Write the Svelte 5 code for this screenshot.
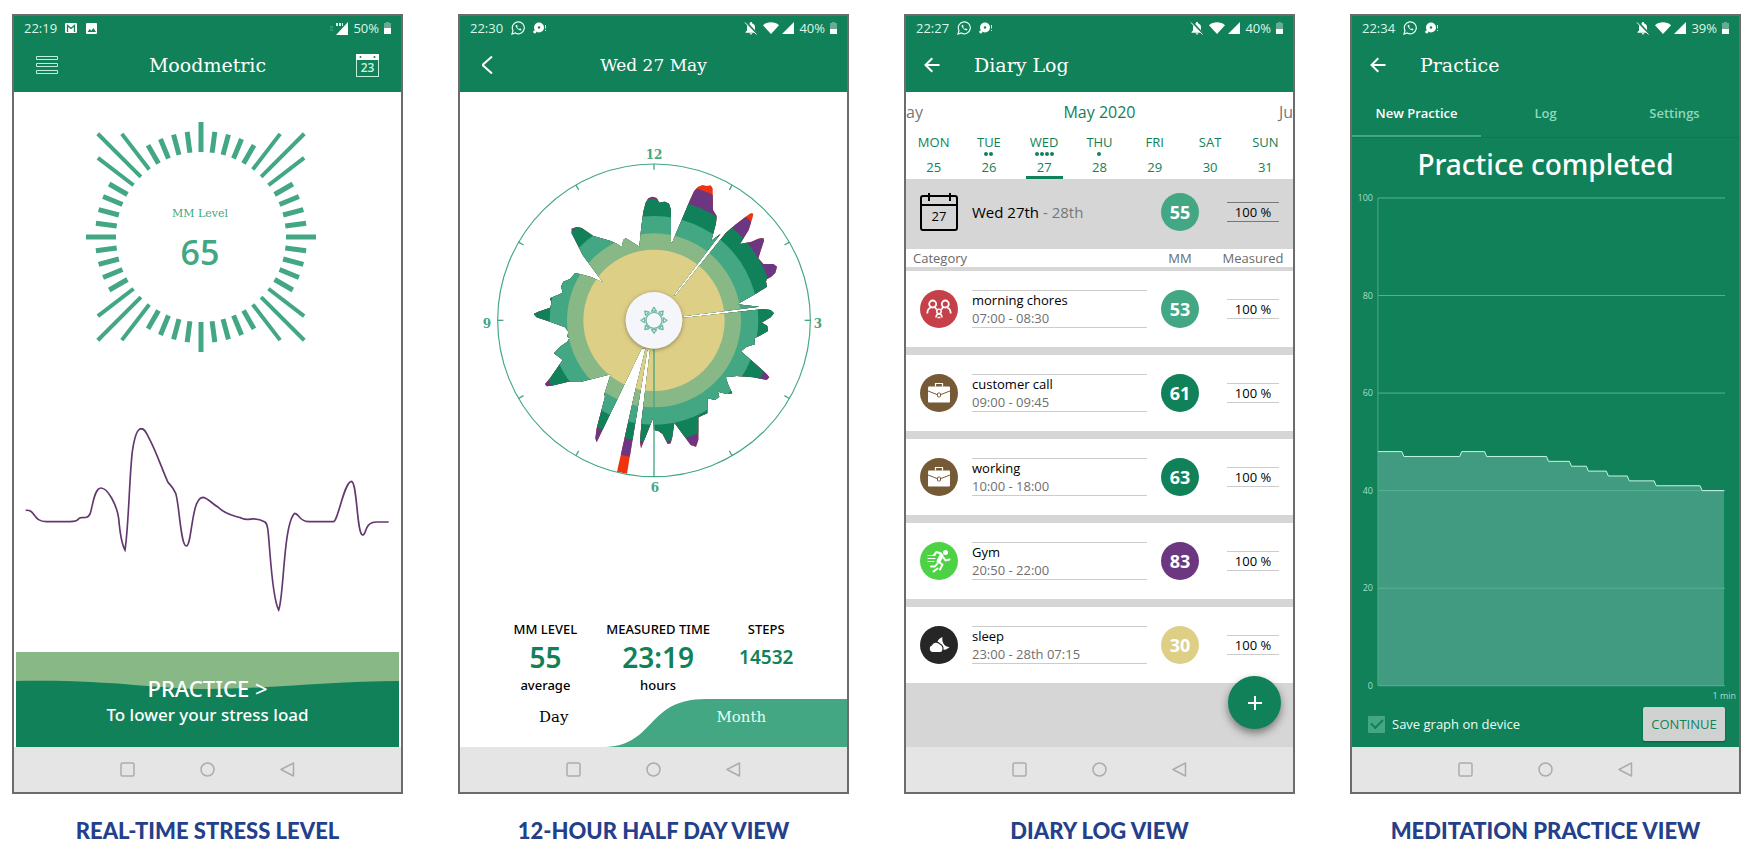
<script>
  const GREEN = '#118159';
  const MID = '#42a782';

  let activeTab = $state('New Practice');
  let saveGraph = $state(true);

  // dial ticks, one every 7.5 degrees
  const ticks = Array.from({ length: 48 }, (_, i) => {
    const pos = i % 12;
    let outer = 106;
    let width = 5;
    if (pos === 0) outer = 115;
    if (pos === 5 || pos === 7) outer = 130;
    if (pos === 6) outer = 146;
    if (pos >= 5 && pos <= 7) width = 4;
    return { angle: i * 7.5, outer, width };
  });

  const hourTicks = [0, 30, 60, 90, 120, 150, 210, 240, 270, 300, 330];
  const rings = [
    { r: 469, color: '#f0330f' },
    { r: 416, color: '#6c3780' },
    { r: 364, color: GREEN },
    { r: 313, color: MID },
    { r: 261, color: '#88b886' },
    { r: 212, color: '#decf87' }
  ];

  const outline =
    '478,350 484,290 490,245 497,218 505,205 517,200 530,204 538,218 547,216 555,215 567,221 573,240 573,335 576,340 ' +
    '588,310 605,270 630,210 642,184 654,170 668,165 680,168 692,166 698,175 699,240 710,258 708,280 694,332 722,311 ' +
    '580,497 586,497 738,308 765,285 800,258 813,249 820,251 818,262 806,300 780,342 815,335 835,326 850,324 852,332 ' +
    '842,362 835,385 850,402 880,402 891,410 886,428 874,440 860,448 858,455 861,470 830,490 772,523 838,530 608,559 ' +
    '608,564 850,537 872,540 882,550 872,562 845,578 862,588 864,603 838,618 823,625 825,643 800,650 783,664 830,705 ' +
    '860,732 868,742 860,750 820,742 770,738 737,742 745,765 757,790 740,792 714,785 718,800 705,810 690,806 683,806 ' +
    '682,850 655,862 655,930 648,950 632,945 610,915 583,878 577,920 572,940 563,942 548,912 535,903 522,900 519,865 ' +
    '483,955 480,935 485,870 510,660 502,660 441,1031 411,1025 466,780 497,655 485,655 430,770 382,870 350,937 ' +
    '346,925 350,895 375,800 373,793 392,733 345,745 300,756 265,755 215,767 200,769 195,762 210,745 248,690 222,670 ' +
    '240,650 262,635 268,625 262,620 265,605 255,592 210,575 170,562 161,552 175,545 210,533 215,520 210,505 245,490 ' +
    '248,485 243,470 250,455 270,447 285,430 300,432 335,442 370,458 345,425 308,375 275,310 275,296 290,291 305,294 ' +
    '340,318 390,332 412,342 425,352 430,330 437,325 450,332';

  const week = [
    { day: 'MON', date: 25, dots: 0 },
    { day: 'TUE', date: 26, dots: 2 },
    { day: 'WED', date: 27, dots: 4, current: true },
    { day: 'THU', date: 28, dots: 1 },
    { day: 'FRI', date: 29, dots: 0 },
    { day: 'SAT', date: 30, dots: 0 },
    { day: 'SUN', date: 31, dots: 0 }
  ];

  const entries = [
    { name: 'morning chores', time: '07:00 - 08:30', icon: 'family', level: 53 },
    { name: 'customer call', time: '09:00 - 09:45', icon: 'case', level: 61 },
    { name: 'working', time: '10:00 - 18:00', icon: 'case', level: 63 },
    { name: 'Gym', time: '20:50 - 22:00', icon: 'run', level: 83 },
    { name: 'sleep', time: '23:00 - 28th 07:15', icon: 'sleep', level: 30 }
  ];

  function levelClass(level) {
    if (level < 40) return 'low';
    if (level < 60) return 'normal';
    if (level < 80) return 'raised';
    return 'high';
  }

  // practice session graph: [start x, end x, level]
  const CHART = { left: 26, right: 373, top: 8, bottom: 497 };
  const steps = [
    [26, 50, 48], [52, 108, 47], [110, 133, 48], [135, 195, 47], [197, 218, 46], [220, 235, 45],
    [237, 255, 44], [257, 276, 43], [278, 303, 42], [305, 349, 41], [351, 373, 40]
  ];
  const yOf = (v) => CHART.bottom - (v / 100) * (CHART.bottom - CHART.top);
  const line = steps.map(([a, b, v]) => `${a},${yOf(v)} ${b},${yOf(v)}`).join(' ');
  const area = `${CHART.left},${CHART.bottom} ${line} ${CHART.right},${CHART.bottom}`;
  const gridValues = [0, 20, 40, 60, 80, 100];
</script>

{#snippet battery(level)}
  <svg width="7" height="12" viewBox="0 0 7 12" aria-hidden="true">
    <path d="M2 0h3v1h2v11H0V1h2z" fill="#fff" opacity="0.35" />
    <rect x="0" y={12 - level} width="7" height={level} fill="#fff" />
  </svg>
{/snippet}

{#snippet statusBar(time, charge)}
  <div class="status">
    <span>{time}</span>
    <svg width="14" height="14" viewBox="0 0 14 14" fill="none" stroke="#e6fff5" aria-hidden="true">
      <path d="M1 13l1-3.4A6 6 0 1 1 4.300 12z" stroke-width="1.200" />
      <path d="M4.700 4.200c-.6 1.400 2.400 5.200 5 5.200l.9-1.200-1.700-.9-.8.800c-.9-.3-1.700-1.200-2-2l.6-.8-.7-1.500z" fill="#e6fff5" stroke="none" />
    </svg>
    <svg width="14" height="12" viewBox="0 0 14 12" aria-hidden="true">
      <circle cx="6" cy="5.500" r="5" fill="#fff" />
      <circle cx="1.800" cy="9.800" r="1.600" fill="#fff" />
      <circle cx="6" cy="5.500" r="1.200" fill="#118159" />
      <path d="M12.500 3v3.500M12.500 8v1" stroke="#cfeee1" />
    </svg>
    <div class="status-right">
      <svg width="14" height="14" viewBox="0 0 14 14" aria-hidden="true">
        <path d="M7 1c.8 0 1 .4 1 1.200 2 .6 3 2.200 3 4.200v3l1.500 1.600v.7h-11V11L3 9.400v-3c0-2 1-3.600 3-4.200C6 1.400 6.200 1 7 1zM5.700 12.300h2.600a1.300 1.300 0 0 1-2.600 0z" fill="#fff" />
        <path d="M2 1l11 12" stroke="#118159" stroke-width="2" />
        <path d="M1 1.500l11.500 12" stroke="#fff" />
      </svg>
      <svg width="16" height="12" viewBox="0 0 16 12" aria-hidden="true">
        <path d="M0 3.200C4.500-.6 11.500-.6 16 3.200L8 12z" fill="#fff" />
      </svg>
      <svg class="signal" width="12" height="12" viewBox="0 0 12 12" aria-hidden="true">
        <path d="M12 0v12H0z" fill="#fff" />
      </svg>
      <span>{charge}</span>
      {@render battery(5)}
    </div>
  </div>
{/snippet}

{#snippet backArrow()}
  <button class="icon-button" aria-label="Back">
    <svg width="16" height="16" viewBox="0 0 16 16" fill="none" stroke="#fff" stroke-width="2" aria-hidden="true">
      <path d="M15.500 8H2M8.300 1.200L1.500 8l6.800 6.800" />
    </svg>
  </button>
{/snippet}

{#snippet navBar()}
  <div class="nav">
    <button class="icon-button" aria-label="Recent apps">
      <svg width="15" height="15" viewBox="0 0 15 15" fill="none" stroke="#acacac" stroke-width="1.500" aria-hidden="true">
        <rect x="1" y="1" width="13" height="13" rx="1.500" />
      </svg>
    </button>
    <button class="icon-button" aria-label="Home">
      <svg width="15" height="15" viewBox="0 0 15 15" fill="none" stroke="#acacac" stroke-width="1.500" aria-hidden="true">
        <circle cx="7.500" cy="7.500" r="6.500" />
      </svg>
    </button>
    <button class="icon-button" aria-label="Go back">
      <svg width="15" height="15" viewBox="0 0 15 15" fill="none" stroke="#acacac" stroke-width="1.500" stroke-linejoin="round" aria-hidden="true">
        <path d="M13.500 1v13L1 7.500z" />
      </svg>
    </button>
  </div>
{/snippet}

{#snippet categoryIcon(name)}
  <span class="category {name}">
    {#if name === 'family'}
      <svg width="26" height="20" viewBox="0 0 26 20" fill="none" stroke="#fff" stroke-width="1.800" aria-hidden="true">
        <circle cx="6.700" cy="5" r="3.500" />
        <circle cx="19.300" cy="5" r="3.500" />
        <path d="M1.300 14.500c0-3 1-5 3.500-6M24.700 14.500c0-3-1-5-3.500-6M8.700 8l2 2.500M17.300 8l-2 2.500" />
        <circle cx="13" cy="12.500" r="2.200" stroke-width="1.500" />
        <path d="M10 18.500c0-2 1-3.500 3-3.500s3 1.500 3 3.500M11.500 18.500h3" stroke-width="1.500" />
      </svg>
    {:else if name === 'case'}
      <svg width="22" height="22" viewBox="0 0 22 22" aria-hidden="true">
        <path d="M7.500 4.500v-3h7v3" fill="none" stroke="#fff" stroke-width="1.200" />
        <rect x="0" y="4.500" width="22" height="16" rx="1" fill="#fff" />
        <path d="M0 9l9 3.500h4L22 9" fill="none" stroke="#765a36" />
        <rect x="9.500" y="11" width="3" height="4" rx="1" fill="#fff" stroke="#765a36" />
      </svg>
    {:else if name === 'run'}
      <svg width="24" height="24" viewBox="0 0 24 24" fill="none" stroke="#fff" stroke-linecap="round" stroke-linejoin="round" aria-hidden="true">
        <circle cx="18.500" cy="3.500" r="2.500" fill="#fff" stroke="none" />
        <path d="M14.500 6.500l-3 6" stroke-width="4" />
        <path d="M14 4.500L9.500 3 7 6M16 8l2.500 3.500 4-1M11.500 13l4 2.500-2.500 5M10 15l-2 2.500H4" stroke-width="2" />
        <path d="M1 6.500h7M1 9.500h7M1 12.500h6" stroke-width="1" />
        <path d="M6.500 22.500l4-3" stroke-width="2" />
      </svg>
    {:else}
      <svg width="22" height="18" viewBox="0 0 22 18" aria-hidden="true">
        <path d="M14.500 1c-4 1.500-6.500 5-5 9.500 1.500 4.500 8.500 4.500 12 .5-5 0-8-4.500-7-10z" fill="#fff" />
        <path d="M4 16.500a4 4 0 0 1-.5-7.500 5 5 0 0 1 8.500-1c2 1 3.200 3.200 3 5.500a3 3 0 0 1-2.500 3z" fill="#fff" stroke="#262626" stroke-width="1.200" />
      </svg>
    {/if}
  </span>
{/snippet}

<main>
  <figure>
    <section class="phone" aria-label="Moodmetric">
      <header>
        <div class="status">
          <span>22:19</span>
          <svg width="12" height="10" viewBox="0 0 12 10" aria-hidden="true">
            <rect width="12" height="10" rx="1" fill="#fff" />
            <path d="M2.500 9V2.500L6 5.500l3.500-3V9" fill="none" stroke="#118159" stroke-width="1.300" />
          </svg>
          <svg class="picture" width="11" height="11" viewBox="0 0 11 11" aria-hidden="true">
            <rect width="11" height="11" rx="1" fill="#fff" />
            <path d="M1.500 9l2.200-3 1.600 1.800L7.500 5 10 9z" fill="#118159" />
          </svg>
          <div class="status-right">
            <svg width="18" height="13" viewBox="0 0 18 13" aria-hidden="true">
              <path d="M18 0v13H6z" fill="#fff" />
              <path d="M6 2.500h7" stroke="#d5f3e6" stroke-width="3" stroke-dasharray="2 1" />
              <path d="M0 5h3M0 8h3" stroke="#5cb291" />
            </svg>
            <span>50%</span>
            {@render battery(6)}
          </div>
        </div>
        <div class="app-bar spread">
          <button class="icon-button" aria-label="Menu">
            <svg width="22" height="18" viewBox="0 0 22 18" fill="none" stroke="#bff0da" aria-hidden="true">
              <path d="M.5.500h21v3H.5zM.5 7.500h21v3H.5zM.5 14.500h21v3H.5z" />
            </svg>
          </button>
          <h1>Moodmetric</h1>
          <button class="icon-button" aria-label="Calendar">
            <svg width="23" height="23" viewBox="0 0 23 23" aria-hidden="true">
              <rect x="0.500" y="0.500" width="22" height="22" fill="none" stroke="#bff0da" />
              <rect width="23" height="6" fill="#fff" />
              <circle cx="4.500" cy="3" r="1" fill="#118159" />
              <circle cx="18.500" cy="3" r="1" fill="#118159" />
              <text class="cal-day light" x="11.500" y="18">23</text>
            </svg>
          </button>
        </div>
      </header>
      <div class="body">
        <div class="dial">
          <svg width="230" height="230" viewBox="-115 -115 230 230">
            {#each ticks as tick}
              <line x1="0" y1="-85" x2="0" y2={-tick.outer} stroke={MID} stroke-width={tick.width} transform="rotate({tick.angle})" />
            {/each}
            <text class="dial-label" x="-1" y="-20">MM Level</text>
            <text class="dial-value" x="-1" y="28">65</text>
          </svg>
        </div>
        <svg class="pulse" viewBox="42 60 1161 600" aria-hidden="true">
          <path
            d="M77 331C108 328 98 366 140 365H210C245 365 228 352 246 353C262 353 264 352 270 342C278 322 282 264 303 264C322 264 350 312 356 355C358 378 364 430 375 450C386 380 388 230 397 155C404 105 412 87 423 86C436 86 440 102 452 124C470 160 486 206 503 245C512 258 518 258 527 280C538 312 542 438 559 438C576 438 574 293 608 292C622 292 634 310 655 322C680 346 700 346 718 352C726 354 732 360 745 358C765 354 778 356 795 366C800 370 801 373 803 385C810 430 814 590 836 630C852 590 850 370 884 340C898 340 896 366 930 365H1000C1014 365 1032 246 1054 244C1072 244 1070 404 1088 405C1100 405 1092 366 1130 366H1166"
            fill="none" stroke="#63386f" stroke-width="5"
          />
        </svg>
        <button class="practice">
          <svg viewBox="0 0 384 95" preserveAspectRatio="none" aria-hidden="true">
            <rect width="384" height="95" fill="#88b886" />
            <path d="M0 29C90 27 140 37 192 37C250 37 320 29 384 29V95H0z" fill={GREEN} />
          </svg>
          <span class="practice-title">PRACTICE &gt;</span>
          <span class="practice-sub">To lower your stress load</span>
        </button>
      </div>
      {@render navBar()}
    </section>
    <figcaption>REAL-TIME STRESS LEVEL</figcaption>
  </figure>

  <figure>
    <section class="phone" aria-label="Half day">
      <header>
        {@render statusBar('22:30', '40%')}
        <div class="app-bar spread">
          <button class="icon-button" aria-label="Back">
            <svg width="12" height="18" viewBox="0 0 12 18" fill="none" stroke="#fff" stroke-width="2" aria-hidden="true">
              <path d="M10 .5L.5 9l9.500 8.500" />
            </svg>
          </button>
          <h1 class="date">Wed 27 May</h1>
        </div>
      </header>
      <div class="body">
        <svg class="clock" width="350" height="353" viewBox="-1 0 350 353">
          <defs>
            <clipPath id="levels"><polygon points={outline} /></clipPath>
            <filter id="soft" x="-30%" y="-30%" width="160%" height="160%">
              <feDropShadow dx="0" dy="3" stdDeviation="6" flood-color="#4d4326" flood-opacity="0.6" />
            </filter>
          </defs>
          <g transform="translate(0 -13) scale(0.33333)">
            <g clip-path="url(#levels)">
              {#each rings as ring}
                <circle cx="522" cy="571" r={ring.r} fill={ring.color} />
              {/each}
            </g>
            <g fill="none" stroke={MID}>
              <circle cx="522" cy="571" r="469" stroke-width="3.500" />
              {#each hourTicks as angle}
                <path d="M522 102v17" stroke-width="4" transform="rotate({angle} 522 571)" />
              {/each}
              <path d="M522 650v390" stroke-width="4" />
            </g>
            <circle cx="522" cy="571" r="85" fill="#f4f6fc" filter="url(#soft)" />
            <g fill="none" stroke="#6dbb9e" stroke-width="4">
              <circle cx="522" cy="571" r="24" />
              {#each [0, 45, 90, 135, 180, 225, 270, 315] as angle}
                <path d="M515 543c0-4 5-4 7-12c2 8 7 8 7 12z" transform="rotate({angle} 522 571)" />
              {/each}
            </g>
          </g>
          <text class="hour" x="174" y="16">12</text>
          <text class="hour" x="338" y="185">3</text>
          <text class="hour" x="175" y="349">6</text>
          <text class="hour" x="7" y="185">9</text>
        </svg>
        <div class="stats">
          <div class="stat">
            <span>MM LEVEL</span>
            <strong>55</strong>
            <span>average</span>
          </div>
          <div class="stat">
            <span>MEASURED TIME</span>
            <strong>23:19</strong>
            <span>hours</span>
          </div>
          <div class="stat">
            <span>STEPS</span>
            <strong class="small">14532</strong>
          </div>
        </div>
        <div class="range">
          <svg viewBox="60 328 1164 142" preserveAspectRatio="none" aria-hidden="true">
            <path d="M500 470C650 462 620 328 800 328H1224V470z" fill={MID} />
          </svg>
          <button class="range-tab">Day</button>
          <button class="range-tab light">Month</button>
        </div>
      </div>
      {@render navBar()}
    </section>
    <figcaption>12-HOUR HALF DAY VIEW</figcaption>
  </figure>

  <figure>
    <section class="phone" aria-label="Diary log">
      <header>
        {@render statusBar('22:27', '40%')}
        <div class="app-bar">
          {@render backArrow()}
          <h1>Diary Log</h1>
        </div>
      </header>
      <div class="body diary">
        <div class="months">
          <span class="side">ay</span>
          <span>May 2020</span>
          <span class="side right">Ju</span>
        </div>
        <div class="week">
          {#each week as d}
            <button class="day" class:current={d.current}>
              <span class="day-name">{d.day}</span>
              <span class="dots">
                {#each Array(d.dots) as _}<i></i>{/each}
              </span>
              <span class="day-date">{d.date}</span>
            </button>
          {/each}
        </div>
        <div class="summary">
          <div class="summary-date">
            <svg width="38" height="38" viewBox="0 0 38 38" fill="none" stroke="#000" stroke-width="2" aria-hidden="true">
              <rect x="1" y="3" width="36" height="34" rx="2" />
              <path d="M1 12h36M9 0v8M30 0v8" />
              <text class="cal-day" x="19" y="28">27</text>
            </svg>
            <p>Wed 27th <span>- 28th</span></p>
          </div>
          <span class="badge normal">55</span>
          <span class="measured dark">100 %</span>
        </div>
        <table>
          <thead>
            <tr>
              <th class="col-category" scope="col">Category</th>
              <th class="col-level" scope="col">MM</th>
              <th class="col-measured" scope="col">Measured</th>
            </tr>
          </thead>
          <tbody>
            {#each entries as entry}
              <tr>
                <td>
                  <div class="entry">
                    {@render categoryIcon(entry.icon)}
                    <div class="entry-text">
                      <span>{entry.name}</span>
                      <span class="time">{entry.time}</span>
                    </div>
                  </div>
                </td>
                <td><span class="badge {levelClass(entry.level)}">{entry.level}</span></td>
                <td><span class="measured">100 %</span></td>
              </tr>
            {/each}
          </tbody>
        </table>
        <button class="fab" aria-label="Add entry">
          <svg width="14" height="14" viewBox="0 0 14 14" stroke="#fff" stroke-width="2" aria-hidden="true">
            <path d="M7 0v14M0 7h14" />
          </svg>
        </button>
      </div>
      {@render navBar()}
    </section>
    <figcaption>DIARY LOG VIEW</figcaption>
  </figure>

  <figure>
    <section class="phone" aria-label="Practice">
      <header>
        {@render statusBar('22:34', '39%')}
        <div class="app-bar">
          {@render backArrow()}
          <h1>Practice</h1>
        </div>
      </header>
      <div class="body session">
        <div class="tabs">
          {#each ['New Practice', 'Log', 'Settings'] as tab}
            <button class="tab" class:active={activeTab === tab} onclick={() => (activeTab = tab)}>{tab}</button>
          {/each}
        </div>
        <h2>Practice completed</h2>
        <svg class="graph" viewBox="0 0 388 513">
          <polygon points={area} fill="#409b80" />
          {#each gridValues as v}
            <line x1={CHART.left} x2="374" y1={yOf(v)} y2={yOf(v)} stroke="#55b493" />
            <text class="axis" x="21" y={yOf(v) + 3}>{v}</text>
          {/each}
          <line x1="26" x2="26" y1={CHART.top} y2={CHART.bottom} stroke="#4dab89" />
          <polyline points={line} fill="none" stroke="#c5f5e2" stroke-width="1" />
          <text class="axis" x="385" y="510">1 min</text>
        </svg>
        <div class="actions">
          <label>
            <input type="checkbox" bind:checked={saveGraph} />
            Save graph on device
          </label>
          <button class="continue">CONTINUE</button>
        </div>
      </div>
      {@render navBar()}
    </section>
    <figcaption>MEDITATION PRACTICE VIEW</figcaption>
  </figure>
</main>

<style>
  :global(body) {
    margin: 0;
    background: #fff;
  }
  main {
    display: grid;
    grid-template-columns: repeat(4, minmax(0, 1fr));
    gap: 55px;
    padding: 14px 15px 0 12px;
    font-family: 'Open Sans', 'Noto Sans', sans-serif;
    font-size: 13px;
    color: #000;
  }
  figure {
    display: flex;
    flex-direction: column;
    margin: 0;
  }
  figcaption {
    margin-top: 21px;
    font-family: Lato, sans-serif;
    font-size: 22px;
    font-weight: 900;
    line-height: 32px;
    text-align: center;
    white-space: nowrap;
    color: #24408a;
  }
  button {
    margin: 0;
    padding: 0;
    border: 0;
    background: none;
    font: inherit;
    color: inherit;
    cursor: pointer;
  }
  svg {
    display: block;
    flex: none;
  }
  .phone {
    display: flex;
    flex-direction: column;
    box-sizing: border-box;
    min-height: 780px;
    border: 2px solid #6c6c6c;
    overflow: hidden;
  }
  header {
    background: #118159;
    color: #fff;
  }
  .status {
    display: flex;
    align-items: center;
    gap: 8px;
    height: 24px;
    padding: 0 10px;
    color: #dcf7eb;
  }
  .picture {
    margin-left: 1px;
  }
  .status-right {
    display: flex;
    align-items: center;
    gap: 5px;
    margin-left: auto;
  }
  .signal {
    margin-left: -2px;
  }
  .app-bar {
    display: flex;
    align-items: center;
    gap: 34px;
    height: 50px;
    padding: 0 18px 2px;
  }
  .spread {
    display: grid;
    grid-template-columns: 1fr auto 1fr;
    gap: 0;
    padding: 0 22px 2px;
  }
  .spread .icon-button:last-child {
    justify-self: end;
  }
  .icon-button {
    display: flex;
    justify-self: start;
  }
  h1 {
    margin: 0;
    font-family: 'DejaVu Serif', serif;
    font-size: 19px;
    font-weight: 400;
  }
  .date {
    font-size: 17px;
  }
  .body {
    display: flex;
    flex: 1;
    flex-direction: column;
    position: relative;
  }
  .nav {
    display: flex;
    justify-content: center;
    align-items: center;
    gap: 65px;
    height: 45px;
    background: #e5e5e5;
  }

  .dial {
    display: flex;
    justify-content: center;
    padding: 30px 14px 0 0;
  }
  .dial svg {
    overflow: visible;
  }
  .dial-label,
  .dial-value {
    fill: #42a782;
    text-anchor: middle;
  }
  .dial-label {
    font-family: 'DejaVu Serif', serif;
    font-size: 11px;
  }
  .dial-value {
    font-size: 34px;
    font-weight: 600;
  }
  .pulse {
    width: 100%;
    margin-top: 68px;
  }
  .practice {
    display: flex;
    flex-direction: column;
    align-items: center;
    position: relative;
    height: 95px;
    margin: auto 2px 0;
    padding-top: 22px;
    box-sizing: border-box;
    color: #fff;
  }
  .practice svg,
  .range svg {
    position: absolute;
    inset: 0;
    width: 100%;
    height: 100%;
  }
  .practice span {
    position: relative;
    font-family: 'Noto Sans', sans-serif;
    font-weight: 500;
  }
  .practice-title {
    font-size: 22px;
    line-height: 28px;
  }
  .practice-sub {
    font-size: 17px;
    line-height: 26px;
  }

  .clock {
    max-width: 100%;
    margin: 51px auto 0;
    overflow: visible;
  }
  .hour {
    font-family: 'DejaVu Serif', serif;
    font-size: 12px;
    font-weight: 700;
    fill: #42a782;
    text-anchor: middle;
  }
  .stats {
    display: flex;
    justify-content: center;
    gap: 29px;
    margin-top: auto;
    padding-bottom: 5px;
  }
  .stat {
    display: flex;
    flex-direction: column;
    align-items: center;
    font-family: 'Noto Sans', sans-serif;
    font-weight: 500;
    line-height: 18px;
  }
  .stat strong {
    font-size: 28px;
    font-weight: 600;
    line-height: 38px;
    color: #118159;
  }
  .stat .small {
    font-size: 19px;
  }
  .range {
    display: grid;
    grid-template-columns: 1fr 1fr;
    position: relative;
    height: 48px;
    padding-right: 12px;
  }
  .range-tab {
    position: relative;
    padding-bottom: 12px;
    font-family: 'DejaVu Serif', serif;
    font-size: 15px;
  }
  .light {
    color: #e2fff3;
  }

  .diary {
    background: #d6d6d6;
  }
  .months {
    display: grid;
    grid-template-columns: 1fr auto 1fr;
    background: #fff;
    color: #118159;
    font-size: 16px;
    line-height: 41px;
  }
  .side {
    color: #777;
  }
  .right {
    text-align: right;
  }
  .week {
    display: grid;
    grid-template-columns: repeat(7, 1fr);
    background: #fff;
    color: #118159;
  }
  .day {
    display: flex;
    flex-direction: column;
    align-items: center;
  }
  .day-name {
    line-height: 19px;
  }
  .dots {
    display: flex;
    gap: 1px;
    height: 6px;
  }
  .dots i {
    width: 4px;
    height: 4px;
    border-radius: 50%;
    background: #118159;
  }
  .day-date {
    width: 37px;
    border-bottom: 3px solid transparent;
    line-height: 18px;
  }
  .current .day-date {
    border-color: #118159;
  }
  .summary {
    display: grid;
    grid-template-columns: 1fr 66px 80px;
    align-items: center;
    height: 70px;
    box-sizing: border-box;
    padding-bottom: 5px;
  }
  .summary-date,
  .entry {
    display: flex;
    align-items: center;
    gap: 14px;
    padding-left: 14px;
  }
  .summary p {
    margin: 0;
    font-size: 15px;
  }
  .summary p span {
    color: #777;
  }
  .cal-day {
    font-size: 13px;
    fill: #000;
    stroke: none;
    text-anchor: middle;
  }
  .cal-day.light {
    font-weight: 600;
    font-size: 12px;
    fill: #c9f5e2;
  }
  .badge {
    display: flex;
    align-items: center;
    justify-content: center;
    width: 38px;
    height: 38px;
    margin: 0 auto;
    border-radius: 50%;
    font-size: 18px;
    font-weight: 700;
    color: #fff;
  }
  .low {
    background: #decf87;
  }
  .normal {
    background: #42a782;
  }
  .raised {
    background: #118159;
  }
  .high {
    background: #6c3780;
  }
  .measured {
    display: block;
    width: 52px;
    margin: 0 auto;
    border: solid #ccc;
    border-width: 1px 0;
    line-height: 18px;
    text-align: center;
  }
  .measured.dark {
    border-color: #777;
  }
  table {
    width: 100%;
    table-layout: fixed;
    border-collapse: collapse;
    background: #fff;
  }
  th {
    height: 18px;
    padding: 0;
    border-bottom: 4px solid #d6d6d6;
    font-weight: 400;
    line-height: 18px;
    color: #6a6a6a;
  }
  .col-category {
    padding-left: 7px;
    text-align: left;
  }
  .col-level {
    width: 66px;
  }
  .col-measured {
    width: 80px;
  }
  td {
    height: 76px;
    padding: 0;
    border-bottom: 8px solid #d6d6d6;
  }
  .entry-text {
    display: flex;
    flex: 1;
    flex-direction: column;
    border: solid #ccc;
    border-width: 1px 0;
    line-height: 18px;
  }
  .time {
    color: #6f6f6f;
  }
  .category {
    display: flex;
    align-items: center;
    justify-content: center;
    width: 38px;
    height: 38px;
    border-radius: 50%;
  }
  .family {
    background: #c6404a;
  }
  .case {
    background: #765a36;
  }
  .run {
    background: #4dd245;
  }
  .sleep {
    background: #262626;
  }
  .fab {
    display: flex;
    align-items: center;
    justify-content: center;
    position: absolute;
    right: 12px;
    bottom: 18px;
    width: 53px;
    height: 53px;
    border-radius: 50%;
    background: #118159;
    box-shadow: 0 4px 8px rgba(0, 0, 0, 0.45);
  }

  .session {
    background: #118159;
    color: #fff;
  }
  .tabs {
    display: grid;
    grid-template-columns: repeat(3, 1fr);
    border-bottom: 1px solid #0f7751;
  }
  .tab {
    border-bottom: 2px solid transparent;
    line-height: 43px;
    font-weight: 600;
    color: #8fd8bb;
  }
  .active {
    border-color: #42a782;
    color: #fff;
  }
  h2 {
    margin: 0;
    padding: 4px 0;
    font-family: 'Noto Sans', sans-serif;
    font-size: 28px;
    font-weight: 500;
    line-height: 44px;
    text-align: center;
  }
  .graph {
    width: 100%;
  }
  .axis {
    font-size: 9px;
    fill: #a5dfc8;
    text-anchor: end;
  }
  .actions {
    display: flex;
    align-items: center;
    justify-content: space-between;
    flex: 1;
    padding: 0 14px 0 16px;
  }
  label {
    display: flex;
    align-items: center;
    gap: 7px;
    color: #e6fff5;
  }
  input {
    appearance: none;
    display: grid;
    place-items: center;
    width: 17px;
    height: 17px;
    margin: 0;
    border-radius: 1px;
    background: #42a782;
  }
  input:checked::after {
    content: '';
    width: 10px;
    height: 5px;
    margin-bottom: 4px;
    border: solid #118159;
    border-width: 0 0 2px 2px;
    transform: rotate(-45deg);
  }
  .continue {
    width: 82px;
    height: 34px;
    border-radius: 2px;
    background: #d0d2d1;
    box-shadow: 0 1px 2px rgba(0, 0, 0, 0.3);
    color: #118159;
  }
</style>
